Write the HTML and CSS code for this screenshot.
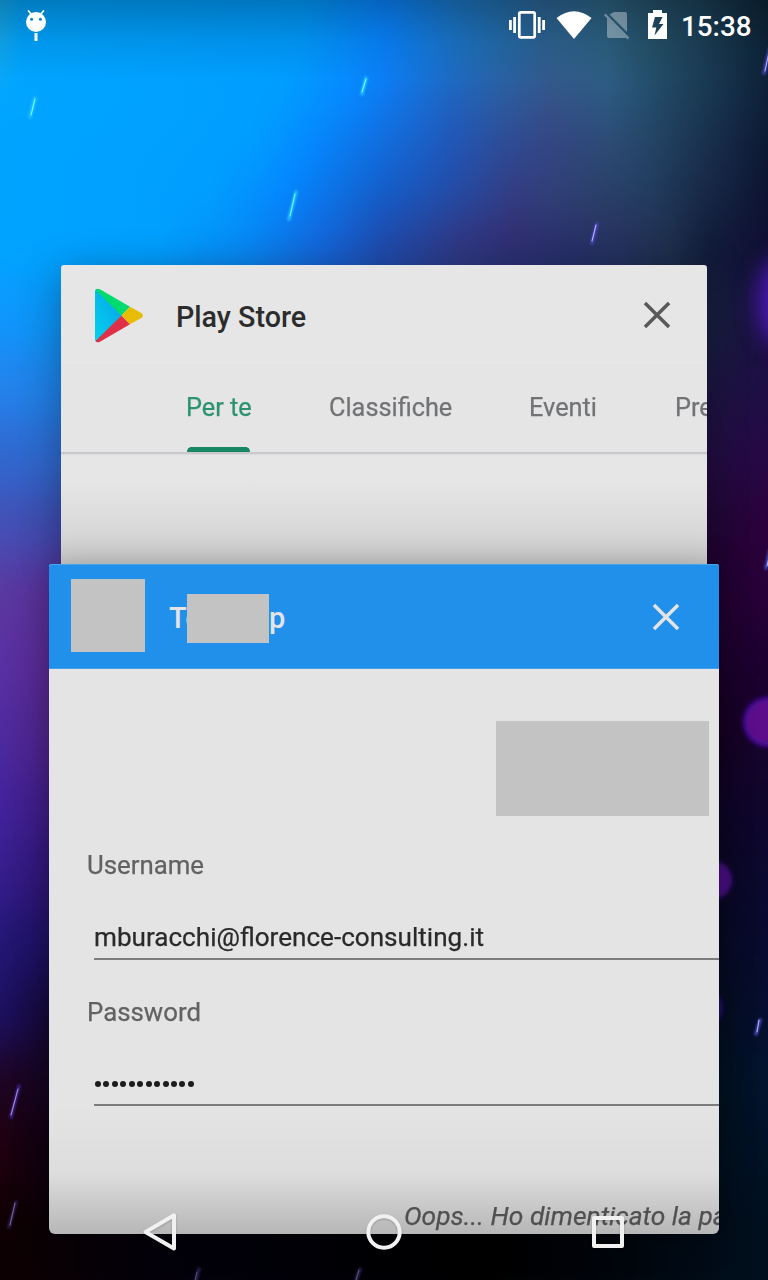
FILE: index.html
```html
<!DOCTYPE html>
<html lang="it">
<head>
<meta charset="utf-8">
<title>Recenti</title>
<link rel="stylesheet" href="styles.css">
</head>
<body>
<div class="screen">
  <div class="wallpaper">
    <div class="sky">
      <div class="band b1"></div><div class="band b2"></div><div class="band b3"></div><div class="band b4"></div>
      <div class="band b5"></div><div class="band b6"></div><div class="band b7"></div><div class="band b8"></div>
      <div class="band b9"></div><div class="band b10"></div><div class="band b11"></div><div class="band b12"></div>
      <div class="band b13"></div><div class="band b14"></div><div class="band b15"></div><div class="band b16"></div>
      <div class="band b17"></div><div class="band b18"></div><div class="band b19"></div>
    </div>
    <svg class="particles" viewBox="0 0 768 1280" width="768" height="1280">
      <defs>
        <filter id="soften" x="0" y="0" width="1" height="1" color-interpolation-filters="sRGB"><feGaussianBlur stdDeviation="0 24"/></filter>
        <filter id="orb" x="-50%" y="-50%" width="200%" height="200%"><feGaussianBlur stdDeviation="2.5"/></filter>
        <filter id="haze" filterUnits="userSpaceOnUse" x="640" y="160" width="240" height="300" color-interpolation-filters="sRGB"><feGaussianBlur stdDeviation="11"/></filter>
        <filter id="glow" filterUnits="userSpaceOnUse" x="0" y="0" width="768" height="1280" color-interpolation-filters="sRGB"><feGaussianBlur stdDeviation="1.1"/></filter>
        <filter id="thin" filterUnits="userSpaceOnUse" x="0" y="0" width="768" height="1280"><feGaussianBlur stdDeviation=".35"/></filter>
      </defs>
      <ellipse cx="782" cy="302" rx="24" ry="44" fill="#4a18b4" filter="url(#haze)"/>
      <circle cx="768" cy="722" r="25" fill="#3c0a94" filter="url(#orb)"/>
      <circle cx="768" cy="722" r="22" fill="#5c118a" filter="url(#orb)"/>
      <circle cx="713" cy="880" r="19" fill="#461080" filter="url(#orb)"/>
      <circle cx="703" cy="1008" r="20" fill="#221066" filter="url(#orb)"/>
      <g filter="url(#glow)" stroke-linecap="round" stroke-width="3.4" fill="none">
        <path stroke="#27bdff" d="M35 98L30 117M366 78L362 94M296 192L289 219"/>
        <path stroke="#4545b5" d="M597 224L592 243M770 48L764 73M770 550L766 568M760 1020L756 1034"/>
        <path stroke="#3a2488" d="M19 1086L11 1117"/>
        <path stroke="#2c1c50" d="M16 1202L9 1227M199 1269L195 1284M360 1269L355 1284"/>
      </g>
      <g filter="url(#thin)" stroke-linecap="round" stroke-width="1.1" fill="none">
        <path stroke="#68ffff" d="M35 99L31 115M366 79L362 92M295 194L290 216"/>
        <path stroke="#b8b2ff" d="M596 225L592 241M769 52L765 71M770 553L767 566M759 1020L757 1032"/>
        <path stroke="#a589d8" d="M18 1089L11 1115"/>
        <path stroke="#7c6690" d="M15 1203L10 1225"/>
        <path stroke="#505078" d="M197 1272L195 1281M359 1270L356 1280"/>
      </g>
    </svg>
    <div class="scrim"></div>
  </div>

  <header class="status">
    <svg class="droid" width="24" height="34" viewBox="0 0 24 34">
      <path d="M4.500 3l3.500 4M19.500 3L16 7" stroke="#fff" stroke-width="1.8" stroke-linecap="round"/>
      <circle cx="12" cy="14" r="10" fill="#fff"/><circle cx="7.600" cy="11.200" r="1.500" fill="#0882c8"/><circle cx="16.400" cy="11.200" r="1.500" fill="#0882c8"/>
      <path d="M10.500 25h3v8h-3z" fill="#fff"/>
    </svg>
    <svg width="243" height="40" viewBox="509 6 243 40" class="signals">
      <rect x="519.300" y="12.300" width="15.400" height="25" rx="1.500" fill="none" stroke="#fff" stroke-width="2.700"/>
      <path d="M509 20h2.800v10H509zM513.200 17h2.800v16h-2.800zM537.800 17h2.800v16h-2.800zM542.200 20h2.800v10h-2.800z" fill="#fff"/>
      <path d="M556.500 18Q574 4.500 591.500 18L574 39z" fill="#fff"/>
      <g fill="#fff" opacity=".35"><path d="M614 12h11q2 0 2 2v18L609.500 14.500z"/><path d="M607 18L626.500 38H609q-2 0-2-2z"/><path d="M605.500 13.500L604 15.300 627.600 39.500 629.300 37.600z"/></g>
      <path fill="#fff" fill-rule="evenodd" d="M653 10h9v3h5v26h-19V13h5zM655 17L652 27.500h4.300l-1.800 8L663.500 24h-4.500l3.500-7z"/>
    </svg>
    <span class="clock">15:38</span>
  </header>

  <main class="recents">
    <section class="card store">
      <div class="card-head">
        <svg class="play" width="50" height="56" viewBox="0 0 50 56">
          <defs><linearGradient id="pb" x1="1" y1="0" x2="0" y2="1"><stop stop-color="#0b9fe4"/><stop offset="1" stop-color="#00d3f0"/></linearGradient></defs>
          <path d="M1 4Q1 1 3 1L28 27.500 3 54Q1 54 1 51z" fill="url(#pb)"/>
          <path d="M1.500 2Q3-.2 6 1.300L36 18.700 27.500 27.500z" fill="#00db70"/>
          <path d="M1.500 53Q3 55.200 6 53.700L36 36.300 27.500 27.500z" fill="#df3048"/>
          <path d="M36 18.700L47.300 25Q50.700 27.500 47.300 30L36 36.300 27.500 27.500z" fill="#e8bb04"/>
        </svg>
        <h2 class="title">Play Store</h2>
        <svg class="close" width="28" height="28" viewBox="0 0 28 28"><path d="M3.200 3.200L24.800 24.800M24.800 3.200L3.200 24.800" stroke="#595959" stroke-width="3.500" stroke-linecap="square"/></svg>
      </div>
      <nav class="tabs">
        <span class="tab active">Per te</span><span class="tab t2">Classifiche</span><span class="tab t3">Eventi</span><span class="tab t4">Pre</span>
      </nav>
    </section>

    <section class="card app">
      <div class="app-head">
        <div class="app-icon"></div>
        <h2 class="app-title"><span class="start">Te</span><span class="cover"></span><span>p</span></h2>
        <svg class="close" width="28" height="28" viewBox="0 0 28 28"><path d="M3.200 3.200L24.800 24.800M24.800 3.200L3.200 24.800" stroke="#e4e4e4" stroke-width="3.500" stroke-linecap="square"/></svg>
      </div>
      <div class="form">
        <div class="logo"></div>
        <div class="label">Username</div>
        <div class="field email"><span>mburacchi@florence-consulting.it</span></div>
        <div class="label second">Password</div>
        <div class="field secret"><i></i><i></i><i></i><i></i><i></i><i></i><i></i><i></i><i></i><i></i><i></i><i></i></div>
        <div class="forgot">Oops... Ho dimenticato la pa</div>
      </div>
    </section>
  </main>

  <svg class="navbar" width="768" height="96" viewBox="0 1184 768 96">
    <g fill="none" stroke="#f1f1f1" stroke-width="4" stroke-linejoin="round">
      <path d="M174 1215.300V1248.500L145.500 1231.900z"/>
      <circle cx="384" cy="1232" r="15.700"/>
      <rect x="594" y="1218" width="28" height="28"/>
    </g>
  </svg>
</div>
</body>
</html>
```
FILE: styles.css
```css
* { box-sizing: border-box; }
body { margin: 0; background: #000; font-family: Roboto, "Liberation Sans", sans-serif; }
.screen { position: relative; width: 768px; height: 1280px; overflow: hidden; }

/* Wallpaper */
.wallpaper { position: absolute; inset: 0; }
.sky { position: absolute; inset: -80px 0; filter: url(#soften); }
.band { height: 70px; }
.b1 { height: 150px; background: linear-gradient(90deg, #14aaf0 0, #00a4ff 22px, #009cff 300px, #0784ff 384px, #1a76c8 455px, #226ca8 505px, #2c6494 545px, #2c6282 605px, #245068 655px, #1c4058 700px, #0c2438); }
.b2 { height: 50px; background: linear-gradient(90deg, #00a6ff, #009eff 280px, #0688ff 350px, #0e7af0 384px, #1f64c0 450px, #2c5ca0 500px, #355488 550px, #2c5a82 610px, #234c6c 650px, #1a3a54 700px, #0e2038); }
.b3 { height: 50px; background: linear-gradient(90deg, #00a4ff, #009eff 250px, #0488ff 310px, #126cdc 384px, #2056b8 450px, #2c4c98 500px, #344484 550px, #2c4a74 610px, #244464 650px, #1a3250 700px, #0c1834); }
.b4 { height: 50px; background: linear-gradient(90deg, #00a4ff, #009eff 210px, #0486ff 285px, #145cc8 384px, #224ca8 450px, #343c80 515px, #304078 550px, #2a4068 600px, #223c60 650px, #182a48 700px, #0c1430); }
.b5 { height: 60px; background: linear-gradient(90deg, #00a4ff, #00a0ff 160px, #0688f4 245px, #1464d8 320px, #2048a8 384px, #32347c 460px, #302c70 510px, #282e66 570px, #26305c 620px, #1e2e4a 670px, #101a38 710px, #100e34); }
.b6 { background: linear-gradient(90deg, #0e98fe, #0a94f4 60px, #1c50b0 384px, #162240 700px, #180e3c); }
.b7 { background: linear-gradient(90deg, #2484ee, #1c80e4 60px, #222060 384px, #1a1640 700px, #1e0e44); }
.b8 { background: linear-gradient(90deg, #3068d0, #2c68cc 60px, #201050 384px, #200e40 700px, #260844); }
.b9 { background: linear-gradient(90deg, #4450b6, #3c4aaa 60px, #201050 384px, #200634 715px, #2c003c); }
.b10 { background: linear-gradient(90deg, #5a389f, #5a309a 50px, #200030 715px, #280038); }
.b11 { background: linear-gradient(90deg, #5a30a4, #582890 50px, #180028 715px, #1c0030); }
.b12 { background: linear-gradient(90deg, #4c2a9e, #502488 50px, #14001e 715px, #18042e); }
.b13 { background: linear-gradient(90deg, #43229c, #3e1c84 50px, #0c0424 715px, #10062c); }
.b14 { background: linear-gradient(90deg, #341e8c, #301474 50px, #080620 715px, #0c0830); }
.b15 { background: linear-gradient(90deg, #221674, #1c1060 50px, #050a20 715px, #080a30); }
.b16 { background: linear-gradient(90deg, #1c1060, #140836 50px, #030c1c 715px, #060e30); }
.b17 { background: linear-gradient(90deg, #1e0420, #14041e 50px, #00101e 715px, #02142e); }
.b18 { background: linear-gradient(90deg, #1e000c, #0e0010 50px, #000006 384px, #000e1c 715px, #001226); }
.b19 { height: 170px; background: linear-gradient(90deg, #0e0002, #060006 90px, #02000a 190px, #000004 384px, #000000 490px, #00040a 600px, #000f1e); }
.particles { position: absolute; inset: 0; }
.scrim { position: absolute; inset: 0 0 auto; height: 80px; background: linear-gradient(rgba(0,0,0,.25), rgba(0,0,0,.19) 15px, rgba(0,0,0,.08) 42px, transparent); }

/* Status bar */
.status { position: relative; display: flex; align-items: flex-start; height: 50px; padding-left: 24px; color: #fff; }
.droid { margin-top: 8px; }
.signals { margin: 6px 0 0 461px; flex: none; }
.clock { margin: 10px 0 0 -71px; font-size: 27.800px; line-height: 33px; font-weight: 500; white-space: nowrap; }

/* Overview cards */
.recents { position: relative; padding-top: 215px; }
.card { overflow: hidden; }
.store { width: 646px; height: 299px; margin-left: 61px; border-radius: 3px 3px 0 0; background: linear-gradient(transparent 215px, rgba(0,0,0,.04) 250px, rgba(0,0,0,.11)), #e6e6e6; box-shadow: 0 8px 42px rgba(0,0,0,.3); }
.card-head { display: flex; align-items: center; height: 101px; padding: 0 36px 0 33px; border-bottom: 1px solid #e3e3e3; }
.title { margin: 0 auto 0 32px; font-size: 28.700px; font-weight: 500; line-height: 34px; color: #2c2c2c; padding-top: 3px; }
.play { margin-top: 1px; filter: blur(.3px); }
.close { flex: none; }
.tabs { display: flex; height: 88px; padding-left: 125px; border-bottom: 2px solid #c9c9cd; background: #e5e5e5; font-size: 25.300px; line-height: 30px; color: #717376; white-space: nowrap; box-shadow: 0 1px 1px #dcdcdc; filter: blur(.45px); -webkit-text-stroke: .25px; }
.tab { padding-top: 27px; flex: none; height: 86px; }
.active { width: 65px; color: #2c9270; background: radial-gradient(circle at 4px 4px, #198763 3.500px, transparent 4px) 1px 81px / 8px 5px no-repeat, radial-gradient(circle at 4px 4px, #198763 3.500px, transparent 4px) 56px 81px / 8px 5px no-repeat, linear-gradient(#198763, #198763) 4px 100% / 57px 5px no-repeat; }
.t2 { margin-left: 78px; width: 122px; }
.t3 { margin-left: 78px; width: 68px; }
.t4 { margin-left: 78px; }
.app { position: relative; width: 670px; height: 670px; margin-left: 49px; border-radius: 3px 3px 6px 6px; background: linear-gradient(transparent 540px, rgba(0,0,0,.03) 610px, rgba(0,0,0,.2)), #e4e4e4; box-shadow: 0 4px 34px rgba(0,0,0,.32); }
.app-head { display: flex; align-items: center; height: 105px; padding: 0 39px 0 22px; background: #2190ea; border-top: 1px solid #46a7eb; border-bottom: 1px solid #42a0ed; }
.app-icon { width: 74px; height: 73px; margin-top: -2px; background: #c3c3c3; }
.app-title { display: flex; align-items: center; margin: 3px auto 0 24px; font-size: 29px; line-height: 49px; font-weight: 500; color: #e4e4e4; }
.start { width: 18px; overflow: hidden; }
.cover { width: 82px; height: 49px; background: #c3c3c3; }
.form { height: 565px; padding-top: 52px; display: flex; flex-direction: column; color: #626262; font-size: 25.800px; line-height: 30px; -webkit-text-stroke: .25px; }
.logo { flex: none; align-self: flex-end; width: 213px; height: 95px; margin: 0 10px 34px 0; background: #c3c3c3; }
.label { margin-left: 38px; filter: blur(.45px); }
.field { display: flex; align-items: center; flex: none; margin-left: 45px; border-bottom: 2px solid #7c7c7c; color: #2a2a2a; filter: blur(.45px); }
.email { height: 80px; padding-top: 36px; font-size: 26.100px; }
.second { margin-top: 37px; }
.secret { height: 79px; padding: 37px 0 0 1px; gap: 2.450px; }
.secret i { width: 6px; height: 6px; border-radius: 50%; background: #1c1c1c; }
.forgot { margin: 95px 0 0 355px; font-style: italic; font-size: 26.400px; color: #505050; white-space: nowrap; filter: blur(.45px); }

/* System navigation overlay */
.navbar { position: absolute; left: 0; bottom: 0; filter: drop-shadow(0 1px 1px rgba(0,0,0,.2)); }
```
